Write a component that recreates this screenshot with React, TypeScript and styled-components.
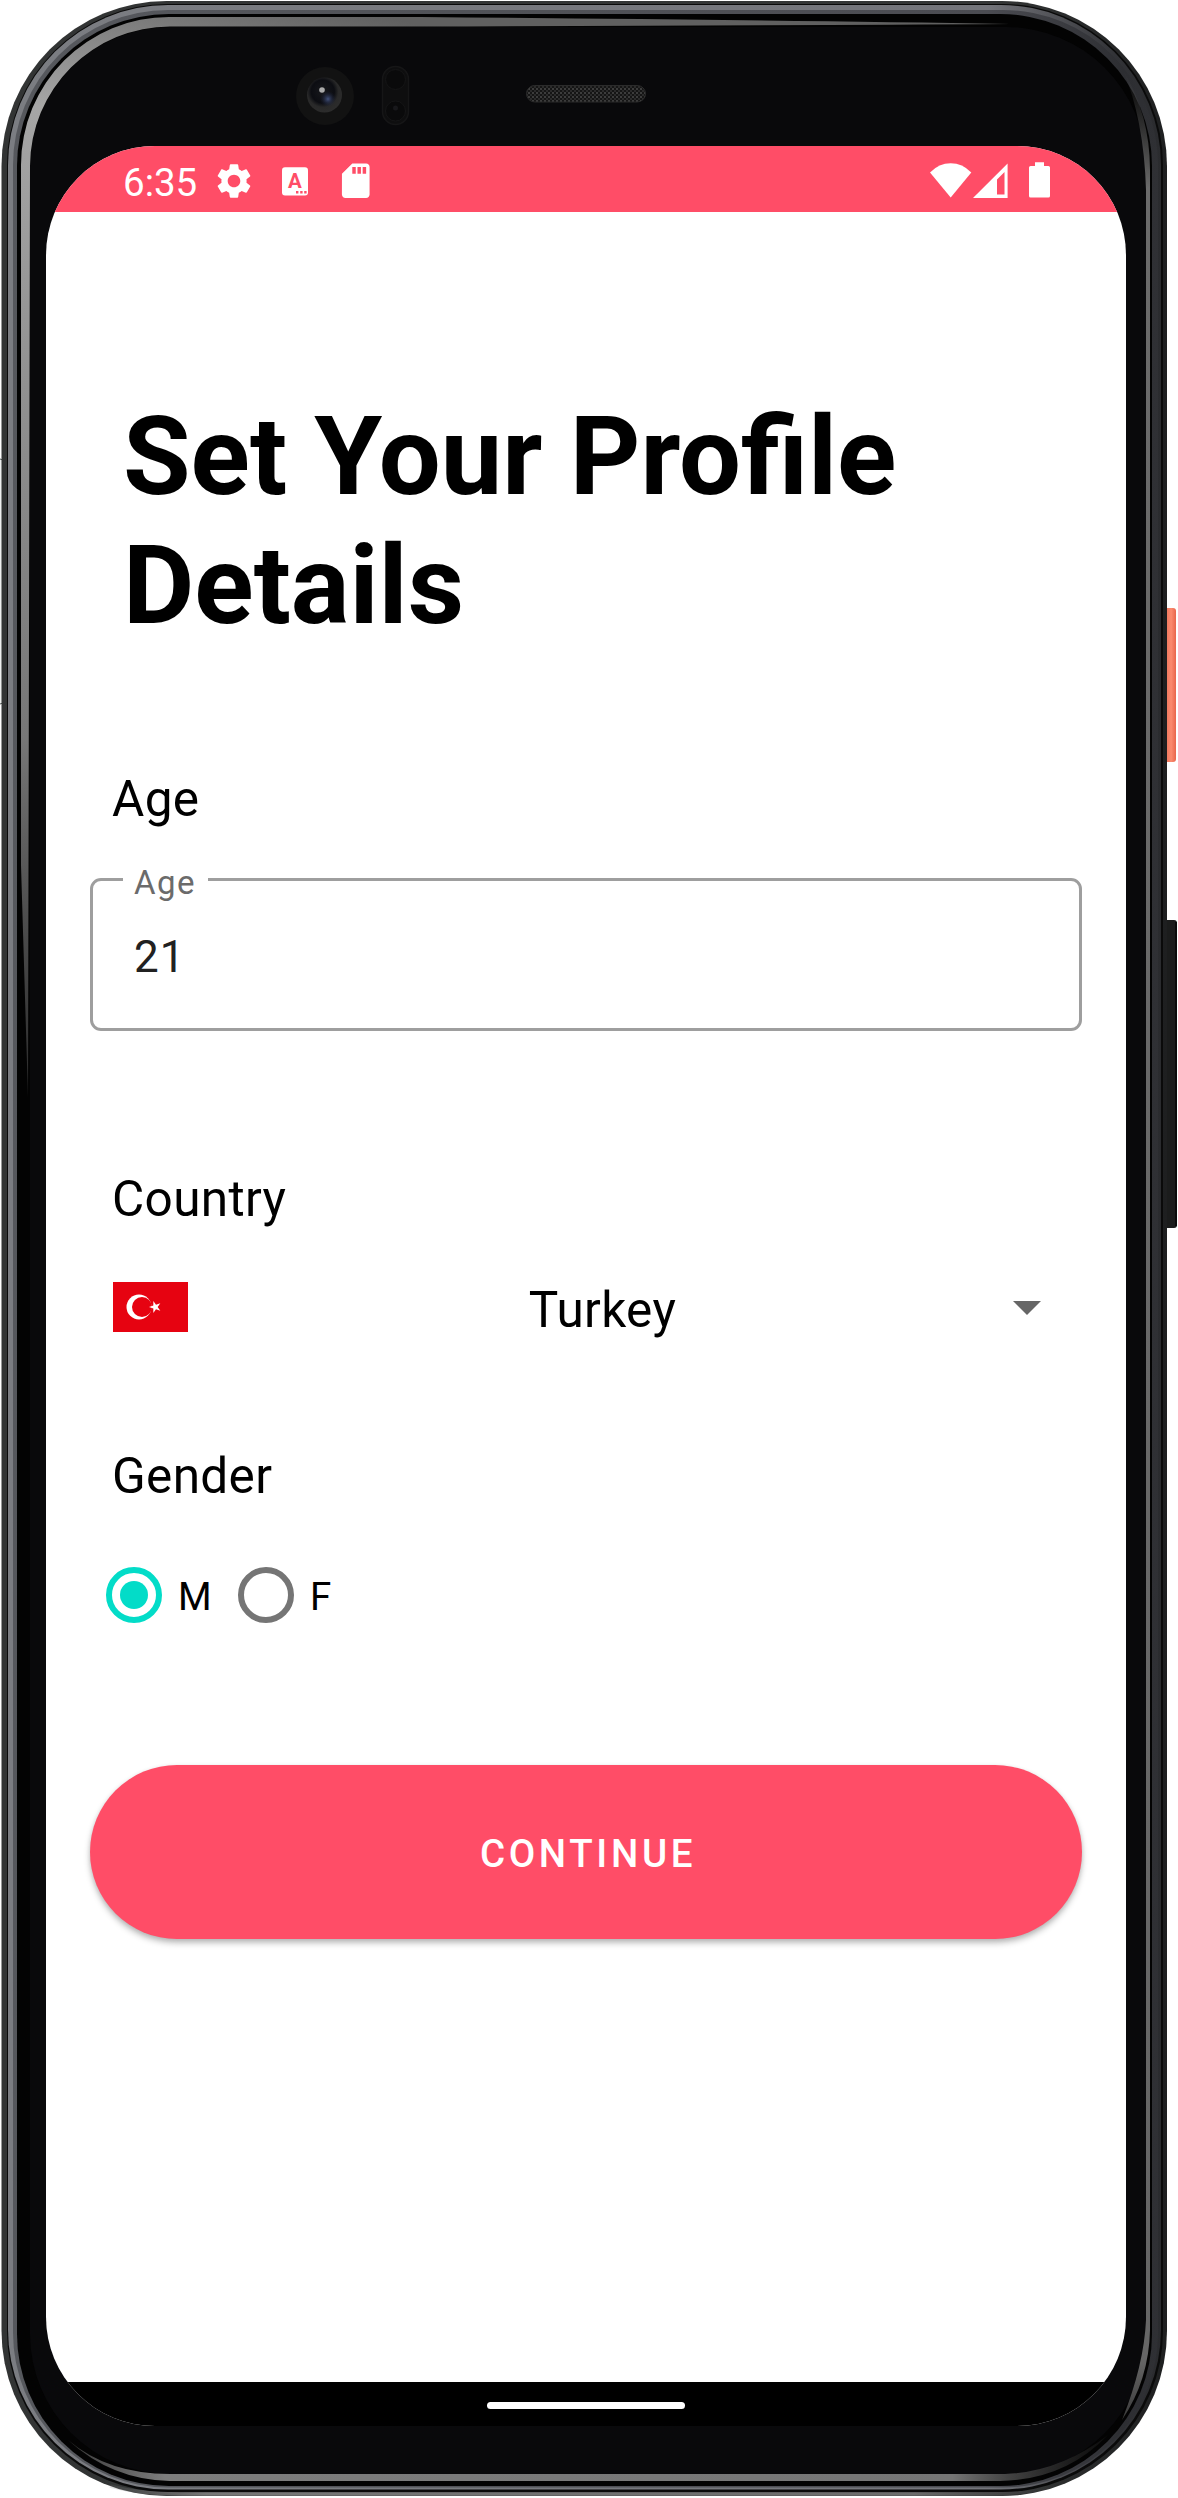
import React, { useState } from "react";
import styled, { createGlobalStyle } from "styled-components";
import { MdSettings, MdSdCard } from "react-icons/md";

const PINK = "#ff4d67";
const TEAL = "#03dcc8";

const GlobalStyle = createGlobalStyle`
  *, *::before, *::after { box-sizing: border-box; }
  body { margin: 0; background: #fff; font-family: Roboto, "Liberation Sans", sans-serif; }
`;

const Device = styled.div`
  position: relative;
  width: 1178px;
  height: 2498px;
  padding: 146px 52px 72px 46px;
  overflow: hidden;
`;

const FrameArt = styled.svg`
  position: absolute;
  left: 0;
  top: 0;
`;

const Screen = styled.main`
  position: relative;
  display: flex;
  flex-direction: column;
  width: 1080px;
  height: 2280px;
  border-radius: 109px;
  overflow: hidden;
  background: #fff;
`;

const StatusBar = styled.header`
  display: flex;
  justify-content: space-between;
  height: 66px;
  padding: 14px 56px 0 77px;
  background: ${PINK};
  color: #fff;
`;

const StatusGroup = styled.div`
  display: flex;
  align-items: flex-start;
`;

const Clock = styled.span`
  width: 90px;
  font-size: 38.5px;
  line-height: 45px;
`;

const IconSlot = styled.span<{ $width: number }>`
  display: flex;
  justify-content: center;
  width: ${(p) => p.$width}px;
  height: 42px;
`;

const Content = styled.form`
  display: flex;
  flex-direction: column;
  flex: 1;
  padding: 180px 44px 0;
`;

const Title = styled.h1`
  margin: 0 0 120px 33px;
  font-size: 109.8px;
  font-weight: 700;
  line-height: 129px;
  color: #000;
`;

const Label = styled.h2`
  margin: 0 0 0 22px;
  font-size: 49.5px;
  font-weight: 400;
  line-height: 58px;
  letter-spacing: 0.35px;
  color: #000;
`;

const Outline = styled.fieldset`
  height: 171px;
  min-width: 0;
  margin: 32px 0 139px;
  padding: 0;
  border: 3px solid #9e9e9e;
  border-radius: 11px;
`;

const FloatingLabel = styled.legend`
  width: 85px;
  margin-left: 30px;
  padding: 0 0 0 11px;
  font-size: 33px;
  line-height: 39px;
  letter-spacing: 1.5px;
  color: #6b6b6b;

  span { position: relative; top: 3px; }
`;

const AgeInput = styled.input`
  display: block;
  width: 900px;
  height: 52px;
  margin: 32px 0 0 41px;
  padding: 0;
  border: 0;
  outline: 0;
  background: none;
  font: 400 44px/52px Roboto, sans-serif;
  letter-spacing: 1px;
  color: #212121;
`;

const CountryRow = styled.div`
  display: grid;
  grid-template-columns: 75px 1fr 28px;
  align-items: start;
  height: 58px;
  margin: 53px 41px 108px 23px;
`;

const FlagArt = styled.svg`
  margin-top: 1px;
`;

const CountryName = styled.span`
  padding-left: 4px;
  text-align: center;
  font-size: 49.5px;
  line-height: 58px;
  letter-spacing: 0.35px;
  color: #000;
`;

const Caret = styled.span`
  margin-top: 20px;
  border: 14px solid transparent;
  border-top-color: #666;
  border-bottom: 0;
`;

const RadioRow = styled.div`
  display: flex;
  height: 56px;
  margin: 62px 0 142px 16px;
`;

const RadioOption = styled.label<{ $width: number }>`
  display: flex;
  width: ${(p) => p.$width}px;
`;

const RadioDot = styled.span<{ $on: boolean }>`
  display: flex;
  align-items: center;
  justify-content: center;
  width: 56px;
  height: 56px;
  border: 6px solid ${(p) => (p.$on ? TEAL : "#757575")};
  border-radius: 50%;

  &::after {
    content: "";
    width: 28px;
    height: 28px;
    border-radius: 50%;
    background: ${(p) => (p.$on ? TEAL : "transparent")};
  }
`;

const RadioText = styled.span`
  padding: 7px 0 0 16px;
  font-size: 38.5px;
  line-height: 45px;
  color: #000;
`;

const HiddenRadio = styled.input`
  appearance: none;
  width: 0;
  height: 0;
  margin: 0;
`;

const ContinueButton = styled.button`
  height: 174px;
  padding: 3px 0 0 4px;
  border: 0;
  border-radius: 87px;
  background: ${PINK};
  box-shadow: 0 4px 6px rgba(0, 0, 0, 0.26), 0 1px 4px rgba(0, 0, 0, 0.08);
  color: #fff;
  font: 500 38.5px/45px Roboto, sans-serif;
  letter-spacing: 3.65px;
`;

const NavBar = styled.footer`
  display: flex;
  justify-content: center;
  height: 44px;
  padding-top: 20px;
  background: #000;
`;

const NavHandle = styled.span`
  width: 198px;
  height: 7px;
  border-radius: 4px;
  background: #fff;
`;

function PhoneFrame() {
  return (
    <FrameArt width="1178" height="2498" viewBox="0 0 1178 2498" aria-hidden="true">
      <defs>
        <linearGradient id="rim" x1="0" x2="1">
          <stop offset="0" stopColor="#323434" />
          <stop offset="0.85" stopColor="#343636" />
          <stop offset="1" stopColor="#1e1f20" />
        </linearGradient>
        <linearGradient id="metal" x1="0" x2="1">
          <stop offset="0" stopColor="#7b7d82" />
          <stop offset="0.85" stopColor="#74757b" />
          <stop offset="0.96" stopColor="#323337" />
          <stop offset="1" stopColor="#2a2b2e" />
        </linearGradient>
        <linearGradient id="metalInner" x1="0" x2="1">
          <stop offset="0" stopColor="#56585d" />
          <stop offset="0.85" stopColor="#4b4c52" />
          <stop offset="0.97" stopColor="#2d2e32" />
          <stop offset="1" stopColor="#2f3034" />
        </linearGradient>
        <linearGradient id="glintLeft" gradientUnits="userSpaceOnUse" x1="20" y1="1090" x2="330" y2="0">
          <stop offset="0" stopColor="#666" stopOpacity="0.4" />
          <stop offset="0.3" stopColor="#777" />
          <stop offset="0.84" stopColor="#a6a6a6" />
          <stop offset="1" stopColor="#606060" />
        </linearGradient>
        <linearGradient id="glintRight" gradientUnits="userSpaceOnUse" x1="0" y1="70" x2="0" y2="2430">
          <stop offset="0" stopColor="#555" stopOpacity="0" />
          <stop offset="0.05" stopColor="#6b6b6b" />
          <stop offset="0.97" stopColor="#666" />
          <stop offset="1" stopColor="#333" />
        </linearGradient>
        <linearGradient id="glintBottom" gradientUnits="userSpaceOnUse" x1="60" y1="0" x2="1110" y2="0">
          <stop offset="0" stopColor="#333" />
          <stop offset="0.1" stopColor="#7d7d7d" />
          <stop offset="0.85" stopColor="#757575" />
          <stop offset="1" stopColor="#333" stopOpacity="0.2" />
        </linearGradient>
        <linearGradient id="underside" gradientUnits="userSpaceOnUse" x1="90" y1="0" x2="1060" y2="0">
          <stop offset="0" stopColor="#777" stopOpacity="0" />
          <stop offset="0.12" stopColor="#777" />
          <stop offset="0.85" stopColor="#6c6c6c" />
          <stop offset="1" stopColor="#555" stopOpacity="0" />
        </linearGradient>
        <linearGradient id="power" x1="0" x2="1">
          <stop offset="0" stopColor="#c85a42" />
          <stop offset="0.25" stopColor="#f27a60" />
          <stop offset="0.6" stopColor="#fb8a6e" />
          <stop offset="1" stopColor="#e8664c" />
        </linearGradient>
        <radialGradient id="lens" cx="0.45" cy="0.4" r="0.6">
          <stop offset="0" stopColor="#17181c" />
          <stop offset="0.55" stopColor="#0c0d12" />
          <stop offset="0.75" stopColor="#292929" />
          <stop offset="1" stopColor="#2c2c2c" />
        </radialGradient>
        <radialGradient id="lensBlue">
          <stop offset="0" stopColor="#43527c" />
          <stop offset="1" stopColor="#1a2038" stopOpacity="0" />
        </radialGradient>
        <pattern id="mesh" width="4" height="4" patternUnits="userSpaceOnUse">
          <rect width="4" height="4" fill="#151515" />
          <rect width="2" height="2" fill="#3c3c3c" />
          <rect x="2" y="2" width="2" height="2" fill="#2b2b2b" />
        </pattern>
      </defs>

      <rect x="-6" y="459" width="10" height="245" rx="4" fill="#eef0ef" stroke="#4e5654" />
      <rect x="1164" y="608" width="12" height="154" rx="3" fill="url(#power)" />
      <rect x="1164" y="920" width="13" height="308" rx="3" fill="#1b1c1c" />
      <rect x="1175" y="922" width="2" height="304" fill="#0b0b0b" />

      <rect x="1.5" y="1" width="1165.5" height="2495" rx="165" fill="url(#rim)" />
      <path d="M110 2486 Q140 2494 180 2494 H985 Q1030 2494 1060 2484" fill="none" stroke="url(#underside)" strokeWidth="3.500" />
      <rect x="7" y="4" width="1156" height="2488" rx="161" fill="#0a0a0a" />
      <rect x="8" y="5" width="1153" height="2484.500" rx="160" fill="url(#metal)" />
      <rect x="13" y="10" width="1145" height="2477.500" rx="155" fill="url(#metalInner)" />
      <rect x="17" y="14" width="1135" height="2472" rx="152" fill="#030303" />
      <rect x="30" y="27" width="1116" height="2447" rx="140" fill="#09090b" />

      <path
        d="M21 865 V165 A148 148 0 0 1 169 17 H420 Q760 20 1010 24 Q760 25.500 420 26.500 H170 A140 140 0 0 0 30 166 L28 1097 Z"
        fill="url(#glintLeft)"
      />
      <path
        d="M1123 70 Q1150 115 1150 170 V2330 Q1149 2380 1122 2420 Q1144 2365 1146 2320 V190 Q1144 120 1123 70 Z"
        fill="url(#glintRight)"
      />
      <path
        d="M68 2440 Q108 2474 170 2474 H1005 Q1060 2472 1108 2435 Q1065 2480 1000 2481 H170 Q112 2480 68 2440 Z"
        fill="url(#glintBottom)"
      />

      <circle cx="325" cy="96" r="29" fill="#121212" />
      <circle cx="324.500" cy="95" r="17.500" fill="url(#lens)" />
      <circle cx="328" cy="99" r="8" fill="url(#lensBlue)" />
      <circle cx="322" cy="90" r="2.800" fill="#aaa" />
      <rect x="382.500" y="66.500" width="26" height="58" rx="13" fill="#0e0e0f" stroke="#161617" strokeWidth="1.500" />
      <circle cx="395.500" cy="79.500" r="10" fill="#0a0a0b" stroke="#151516" />
      <circle cx="395.500" cy="111" r="10" fill="#0a0a0b" stroke="#151516" />
      <circle cx="395.500" cy="108" r="2.500" fill="#18181b" />
      <rect x="526.500" y="85.500" width="119" height="16.500" rx="8.250" fill="url(#mesh)" stroke="#2b2b2b" />
    </FrameArt>
  );
}

function KeyboardIcon() {
  return (
    <svg width="26" height="42" viewBox="0 0 26 42" aria-hidden="true">
      <rect y="7.300" width="26" height="28.200" rx="3" fill="#fff" />
      <text x="13" y="28.300" textAnchor="middle" fontFamily="Roboto" fontSize="20.500" fontWeight="700" fill={PINK}>
        A
      </text>
      <path d="M14 31h2.400v2.400H14zM18.200 31h2.400v2.400h-2.400zM22.200 31h2.400v2.400h-2.400z" fill={PINK} />
    </svg>
  );
}

function WifiIcon() {
  return (
    <svg width="42" height="42" viewBox="0 0 42 42" aria-hidden="true">
      <path d="M0 12.500 Q9 3.300 20.700 3.300 T41.300 12.500 L20.700 37.600 Z" fill="#fff" />
    </svg>
  );
}

function SignalIcon() {
  return (
    <svg width="35" height="42" viewBox="0 0 35 42" aria-hidden="true">
      <path fillRule="evenodd" d="M0 38 L34.600 3.500 V38 Z M24 19.500 V34.500 H31.500 V12 Z" fill="#fff" />
    </svg>
  );
}

function BatteryIcon() {
  return (
    <svg width="21" height="42" viewBox="0 0 21 42" aria-hidden="true">
      <path
        d="M6 2.300h9v3.700h4.400q1.600 0 1.600 1.600v28.400q0 1.600-1.600 1.600H1.600q-1.600 0-1.600-1.600V7.600Q0 6 1.600 6H6z"
        fill="#fff"
      />
    </svg>
  );
}

function TurkeyFlag() {
  return (
    <FlagArt width="75" height="50" viewBox="0 0 75 50" role="img" aria-label="Turkey">
      <rect width="75" height="50" fill="#e60311" />
      <circle cx="26" cy="25" r="12.500" fill="#fff" />
      <circle cx="29" cy="25" r="10" fill="#e60311" />
      <polygon
        points="36,25 40.320,23.600 40.320,19.060 42.990,22.730 47.310,21.330 44.640,25 47.310,28.670 42.990,27.270 40.320,30.940 40.320,26.400"
        fill="#fff"
      />
    </FlagArt>
  );
}

export default function App() {
  const [gender, setGender] = useState("M");
  const [age, setAge] = useState("21");

  return (
    <>
      <GlobalStyle />
      <Device>
        <PhoneFrame />
        <Screen>
          <StatusBar>
            <StatusGroup>
              <Clock>6:35</Clock>
              <IconSlot $width={42}><MdSettings size={42} /></IconSlot>
              <IconSlot $width={80}><KeyboardIcon /></IconSlot>
              <IconSlot $width={42}><MdSdCard size={41.5} /></IconSlot>
            </StatusGroup>
            <StatusGroup>
              <IconSlot $width={45}><WifiIcon /></IconSlot>
              <IconSlot $width={35}><SignalIcon /></IconSlot>
              <IconSlot $width={62}><BatteryIcon /></IconSlot>
            </StatusGroup>
          </StatusBar>

          <Content onSubmit={(e: React.FormEvent) => e.preventDefault()}>
            <Title>Set Your Profile Details</Title>

            <Label>Age</Label>
            <Outline>
              <FloatingLabel><span>Age</span></FloatingLabel>
              <AgeInput value={age} onChange={(e) => setAge(e.target.value)} aria-label="Age" />
            </Outline>

            <Label>Country</Label>
            <CountryRow>
              <TurkeyFlag />
              <CountryName>Turkey</CountryName>
              <Caret />
            </CountryRow>

            <Label>Gender</Label>
            <RadioRow>
              {["M", "F"].map((g) => (
                <RadioOption key={g} $width={132}>
                  <HiddenRadio type="radio" name="gender" checked={gender === g} onChange={() => setGender(g)} />
                  <RadioDot $on={gender === g} />
                  <RadioText>{g}</RadioText>
                </RadioOption>
              ))}
            </RadioRow>

            <ContinueButton type="submit">CONTINUE</ContinueButton>
          </Content>

          <NavBar><NavHandle /></NavBar>
        </Screen>
      </Device>
    </>
  );
}
